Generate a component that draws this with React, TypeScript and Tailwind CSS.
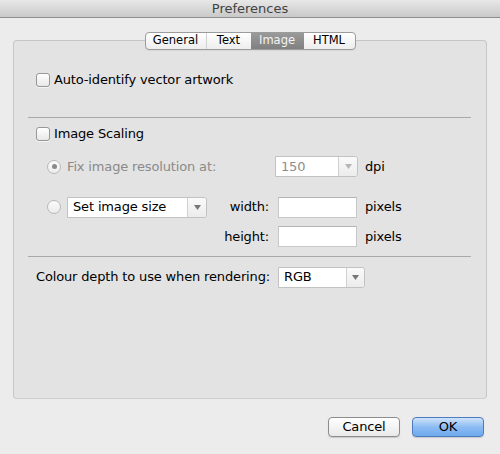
import React from "react";

const font = { fontFamily: '"DejaVu Sans", "Liberation Sans", sans-serif' };

function Checkbox() {
  return (
    <div className="w-[14px] h-[14px] rounded-[3px] border border-[#979797] bg-gradient-to-b from-[#ffffff] to-[#e8e8e8] shadow-[0_1px_0_rgba(255,255,255,0.6)] shrink-0" />
  );
}

function Radio({ checked }: { checked?: boolean }) {
  return (
    <div className="w-[14px] h-[14px] rounded-full border border-[#b8b8b8] bg-gradient-to-b from-[#fbfbfb] to-[#ececec] flex items-center justify-center shrink-0">
      {checked && <div className="w-[5px] h-[5px] rounded-full bg-[#8a8a8a]" />}
    </div>
  );
}

function Arrow({ color }: { color: string }) {
  return (
    <svg width="7" height="5" viewBox="0 0 7 5">
      <path d="M0 0 L7 0 L3.5 5 Z" fill={color} />
    </svg>
  );
}

function Combo({
  w,
  text,
  disabled,
  arrowW,
  h,
}: {
  w: string;
  text: string;
  disabled?: boolean;
  arrowW: string;
  h: string;
}) {
  return (
    <div className={`${w} ${h} flex border border-[#c2c2c2] rounded-r-[3px] bg-white shrink-0`}>
      <div
        className={`flex-1 flex items-center pl-[5px] text-[13px] ${
          disabled ? "text-[#8d8d8d]" : "text-black"
        }`}
      >
        {text}
      </div>
      <div
        className={`${arrowW} border-l border-[#d0d0d0] bg-gradient-to-b from-[#fafafa] to-[#ececec] rounded-r-[3px] flex items-center justify-center`}
      >
        <Arrow color={disabled ? "#b5b5b5" : "#777777"} />
      </div>
    </div>
  );
}

function TextBox() {
  return (
    <div className="w-[79px] h-[21px] bg-white border border-[#c8c8c8] border-t-[#b4b4b4] shrink-0" />
  );
}

export default function App() {
  return (
    <div
      className="w-[500px] h-[454px] bg-[#ececec] flex flex-col text-[13px] tracking-[-0.15px] text-black overflow-hidden"
      style={font}
    >
      {/* Title bar */}
      <div className="h-[18px] shrink-0 bg-gradient-to-b from-[#e8e8e8] to-[#c9c9c9] border-b border-[#8f8f8f] flex items-center justify-center">
        <span className="text-[13px] text-[#424242] leading-none tracking-normal">Preferences</span>
      </div>

      {/* Tabs */}
      <div className="flex justify-center mt-[14px] relative z-10 shrink-0">
        <div className="flex h-[18px] border border-[#9c9c9c] rounded-[4px] bg-gradient-to-b from-[#ffffff] to-[#ededed] overflow-hidden text-[11.5px] tracking-normal shadow-[0_1px_0_rgba(0,0,0,0.05)]">
          <div className="w-[61px] flex items-center justify-center border-r border-[#d2d2d2]">General</div>
          <div className="w-[44px] flex items-center justify-center">Text</div>
          <div className="w-[53px] flex items-center justify-center bg-gradient-to-b from-[#9a9a9a] to-[#808080] text-[#f4f4f4]">Image</div>
          <div className="w-[51px] flex items-center justify-center">HTML</div>
        </div>
      </div>

      {/* Box */}
      <div className="mx-[13px] -mt-[10px] h-[359px] shrink-0 border border-[#c6c6c6] border-b-[#cfcfcf] rounded-[4px] bg-[#e3e3e3] flex flex-col">
        {/* Auto-identify */}
        <div className="flex items-center h-[14px] mt-[32px] pl-[22px] gap-[4px]">
          <Checkbox />
          <span>Auto-identify vector artwork</span>
        </div>
        <div className="h-px bg-[#a9a9a9] mt-[30px] ml-[14px] mr-[15px]" />

        {/* Image scaling */}
        <div className="flex items-center h-[14px] mt-[9px] pl-[22px] gap-[4px]">
          <Checkbox />
          <span>Image Scaling</span>
        </div>

        {/* Fix resolution */}
        <div className="flex items-center h-[21px] mt-[15px] pl-[33px]">
          <Radio checked />
          <span className="ml-[6px] w-[208px] text-[#8a8a8a]">Fix image resolution at:</span>
          <Combo w="w-[83px]" h="h-[21px]" text="150" disabled arrowW="w-[19px]" />
          <span className="ml-[7px]">dpi</span>
        </div>

        {/* Set image size */}
        <div className="flex items-center h-[22px] mt-[19px] pl-[33px]">
          <Radio />
          <div className="ml-[6px]">
            <Combo w="w-[140px]" h="h-[21px]" text="Set image size" arrowW="w-[19px]" />
          </div>
          <span className="w-[62px] text-right">width:</span>
          <div className="ml-[9px]">
            <TextBox />
          </div>
          <span className="ml-[8px]">pixels</span>
        </div>

        <div className="flex items-center h-[21px] mt-[8px] pl-[193px]">
          <span className="w-[62px] text-right">height:</span>
          <div className="ml-[9px]">
            <TextBox />
          </div>
          <span className="ml-[8px]">pixels</span>
        </div>

        <div className="h-px bg-[#a9a9a9] mt-[9px] ml-[14px] mr-[15px]" />

        {/* Colour depth */}
        <div className="flex items-center h-[20px] mt-[10px] pl-[22px]">
          <span className="w-[242px]">Colour depth to use when rendering:</span>
          <Combo w="w-[87px]" h="h-[21px]" text="RGB" arrowW="w-[18px]" />
        </div>
      </div>

      {/* Buttons */}
      <div className="flex justify-end gap-[12px] mt-[18px] pr-[16px] shrink-0">
        <button className="w-[72px] h-[20px] rounded-[4px] border border-[#8c8c8c] bg-gradient-to-b from-[#ffffff] to-[#e9e9e9] text-[13px] flex items-center justify-center shadow-[0_1px_1px_rgba(0,0,0,0.15)]">
          Cancel
        </button>
        <button className="w-[72px] h-[20px] rounded-[4px] border border-[#4d7bbd] bg-gradient-to-b from-[#cfe3fb] via-[#8dbcf3] to-[#6ea9ee] text-[13px] flex items-center justify-center shadow-[0_1px_1px_rgba(0,0,0,0.15)]">
          OK
        </button>
      </div>
    </div>
  );
}
